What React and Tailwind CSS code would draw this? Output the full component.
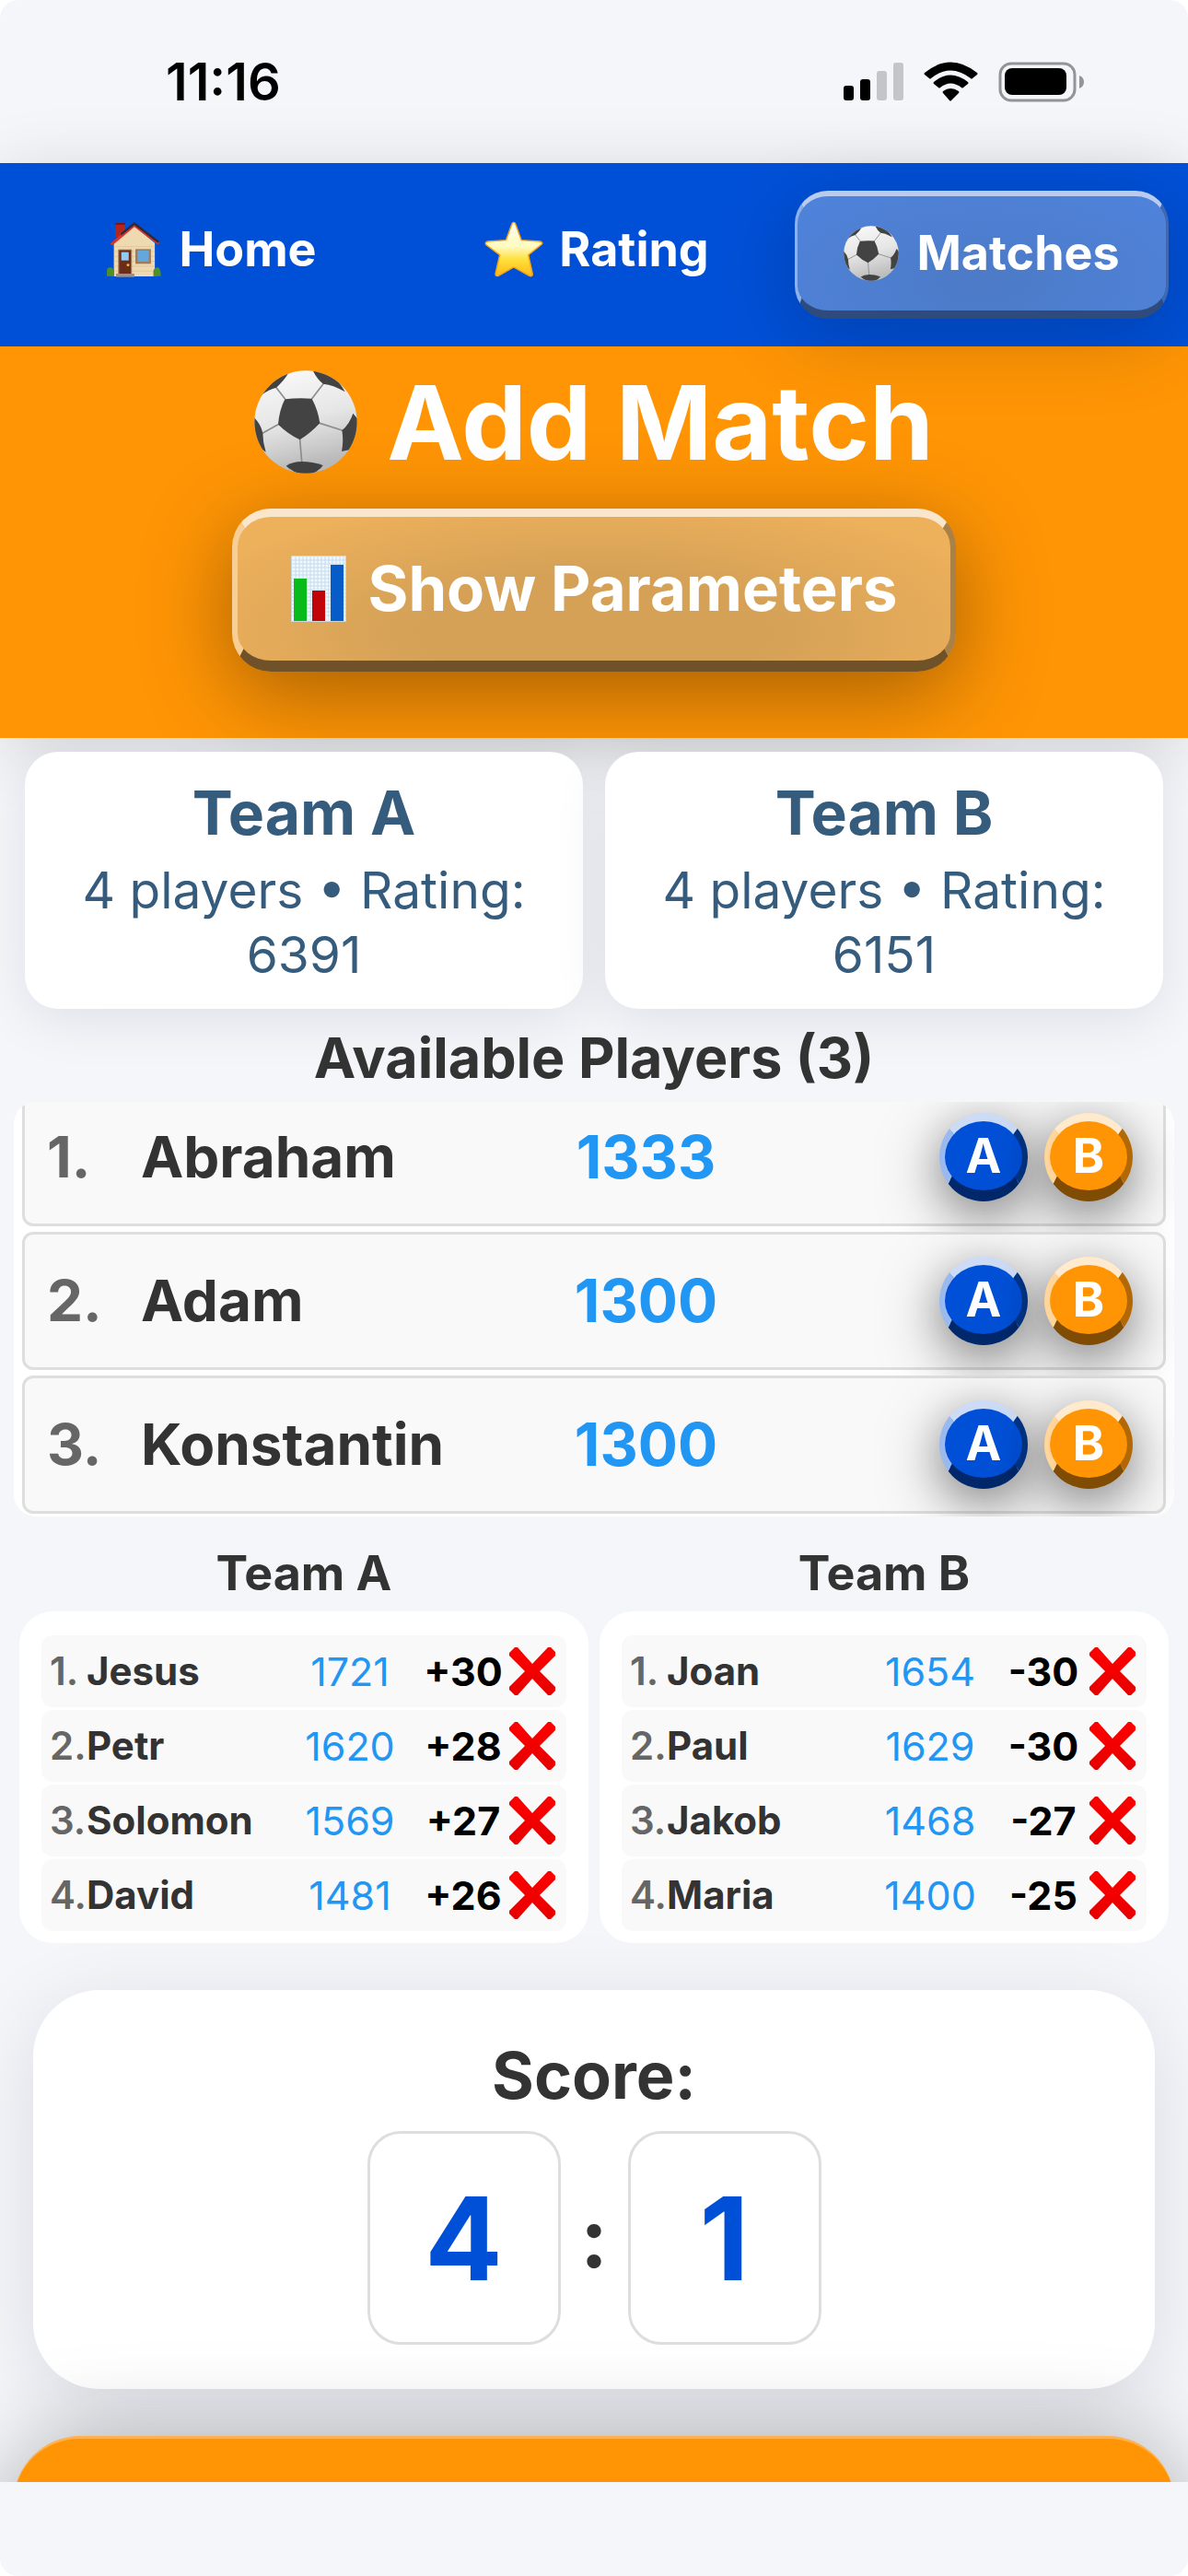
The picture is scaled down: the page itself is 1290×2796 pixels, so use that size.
import React from "react";

const availablePlayers = [
  { name: "Abraham", rating: 1333 },
  { name: "Adam", rating: 1300 },
  { name: "Konstantin", rating: 1300 },
];

const teams = [
  {
    name: "Team A",
    total: 6391,
    players: [
      { name: "Jesus", rating: 1721, change: "+30" },
      { name: "Petr", rating: 1620, change: "+28" },
      { name: "Solomon", rating: 1569, change: "+27" },
      { name: "David", rating: 1481, change: "+26" },
    ],
  },
  {
    name: "Team B",
    total: 6151,
    players: [
      { name: "Joan", rating: 1654, change: "-30" },
      { name: "Paul", rating: 1629, change: "-30" },
      { name: "Jakob", rating: 1468, change: "-27" },
      { name: "Maria", rating: 1400, change: "-25" },
    ],
  },
];

function SoccerBall({ className, id }) {
  return (
    <svg className={className} viewBox="30 36 336 336" aria-hidden="true">
      <defs>
        <linearGradient id={id} x1="0" y1="0" x2="0.25" y2="1">
          <stop offset="0" stopColor="#fbfbfb" />
          <stop offset="0.55" stopColor="#e6e6e6" />
          <stop offset="1" stopColor="#bdbdbd" />
        </linearGradient>
        <clipPath id={id + "-clip"}>
          <circle cx="198" cy="204" r="167" />
        </clipPath>
      </defs>
      <circle cx="198" cy="204" r="167" fill={"url(#" + id + ")"} />
      <g clipPath={"url(#" + id + "-clip)"}>
        <g fill="none" stroke="#8d8d8d" strokeWidth="5" strokeLinecap="round">
          <path d="M130 128L102 92M218 128L255 80M244 208L316 231M179 262L185 333M108 212L58 240" />
        </g>
        <g fill="#434343">
          <path d="M130 130Q174 124 218 128Q238 165 244 208Q214 240 179 262Q140 243 108 212Q112 165 130 130Z" />
          <path d="M54 116Q66 70 142 44Q128 68 102 92Q78 98 54 116Z" />
          <path d="M222 38Q290 36 326 106Q290 84 255 80Q236 66 222 38Z" />
          <path d="M352 176L372 200L360 290L315 300Q322 266 316 231Q340 212 352 176Z" />
          <path d="M134 347Q155 333 185 333Q220 333 254 345Q236 372 198 376Q160 372 134 347Z" />
          <path d="M30 190Q52 212 58 240Q58 270 68 302Q40 290 26 225Z" />
        </g>
      </g>
    </svg>
  );
}

function House({ className }) {
  return (
    <svg className={className} viewBox="64 60 154 180" preserveAspectRatio="none" aria-hidden="true">
      <rect x="88" y="63" width="28" height="45" fill="#b3261e" />
      <rect x="88" y="63" width="28" height="6" fill="#7a1712" />
      <path d="M84 128L142 74L200 128V237H84Z" fill="#efd9b0" />
      <path d="M84 140H200M84 156H200M84 172H200M84 188H200M84 204H200M84 220H200" stroke="#dcc295" strokeWidth="2" />
      <path d="M142 61L212 124V131H206L142 76L80 136L73 131Z" fill="#d9342b" />
      <path d="M142 60L213 123L209 128L142 70L104 104V96Z" fill="#2b2b31" />
      <rect x="96" y="149" width="39" height="80" fill="#a07a5c" />
      <rect x="99" y="152" width="33" height="77" fill="#6d2b1a" />
      <rect x="105" y="158" width="21" height="27" fill="#8fcdf3" />
      <circle cx="124" cy="200" r="4" fill="#f2c230" />
      <rect x="145" y="148" width="44" height="48" fill="#a07a5c" />
      <rect x="151" y="153" width="32" height="36" fill="#64a7dc" />
      <rect x="90" y="228" width="52" height="11" fill="#9c9188" />
      <path d="M64 236V220Q64 208 74 208Q84 210 84 222V237Z" fill="#4f8f2a" />
      <path d="M196 237V220Q198 208 208 207Q218 212 217 236Z" fill="#4f8f2a" />
    </svg>
  );
}

function Star({ className }) {
  return (
    <svg className={className} viewBox="1137 56 169 183" preserveAspectRatio="none" aria-hidden="true">
      <defs>
        <linearGradient id="star-fill" x1="0" y1="0" x2="0" y2="1">
          <stop offset="0" stopColor="#fffdf0" />
          <stop offset="0.45" stopColor="#fffbc0" />
          <stop offset="0.7" stopColor="#ffdf3a" />
          <stop offset="1" stopColor="#fcb818" />
        </linearGradient>
      </defs>
      <path
        d="M1221 60Q1225 60 1227 68L1243 118L1296 122Q1306 125 1301 132L1263 166L1275 228Q1275 238 1266 234L1221 206L1177 234Q1168 237 1169 227L1181 166L1142 133Q1137 125 1147 122L1199 118L1215 68Q1217 60 1221 60Z"
        fill="url(#star-fill)"
        stroke="#f2a21c"
        strokeWidth="4"
        strokeLinejoin="round"
      />
    </svg>
  );
}

function BarChart({ className }) {
  return (
    <svg className={className} viewBox="0 0 60 72" aria-hidden="true">
      <rect width="60" height="72" fill="#c9d6dc" />
      <rect x="1" y="1" width="58" height="70" fill="#f1f7fb" />
      <path
        d="M5 1V71M9 1V71M13 1V71M17 1V71M21 1V71M25 1V71M29 1V71M33 1V71M37 1V71M41 1V71M45 1V71M49 1V71M53 1V71M57 1V71M1 5H59M1 9H59M1 13H59M1 17H59M1 21H59M1 25H59M1 29H59M1 33H59M1 37H59M1 41H59M1 45H59M1 49H59M1 53H59M1 57H59M1 61H59M1 65H59"
        stroke="#c3ddf0"
        strokeWidth="1"
      />
      <rect x="3" y="25" width="14" height="46" fill="#08bb1b" />
      <rect x="23" y="38" width="14" height="33" fill="#c00409" />
      <rect x="43" y="10" width="14" height="61" fill="#075cc8" />
    </svg>
  );
}

function StatusIcons() {
  return (
    <svg className="h-[44px] w-[262px]" viewBox="0 0 262 44" aria-hidden="true">
      <rect x="0" y="26" width="11" height="16" rx="3" fill="#000" />
      <rect x="18" y="19" width="11" height="23" rx="3" fill="#000" />
      <rect x="36" y="10" width="11" height="32" rx="3" fill="#c4c4c9" />
      <rect x="54" y="1" width="11" height="41" rx="3" fill="#c4c4c9" />
      <path d="M88 12Q116 -11 145 12Q146 13 145 14L140 18Q139 19 138 18Q116 1 95 18Q94 19 93 18L88 14Q87 13 88 12Z" fill="#000" />
      <path d="M98 22Q116 7 135 22Q136 23 135 24L130 28Q129 29 128 28Q116 19 105 28Q104 29 103 28L98 24Q97 23 98 22Z" fill="#000" />
      <path d="M108 32Q116 26 125 32Q126 33 125 34L117 42Q116 43 115 42L108 34Q107 33 108 32Z" fill="#000" />
      <rect x="170" y="2" width="81" height="40" rx="12" fill="none" stroke="#949496" strokeWidth="3" />
      <rect x="175" y="7" width="67" height="29" rx="8" fill="#000" />
      <path d="M256 15Q261 17 261 22Q261 27 256 29Z" fill="#949496" />
    </svg>
  );
}

function Cross() {
  return (
    <svg className="h-[52px] w-[52px]" viewBox="0 0 52 52" aria-hidden="true">
      <defs>
        <linearGradient id="cross-fill" x1="0" y1="0" x2="0" y2="1">
          <stop offset="0" stopColor="#ff0000" />
          <stop offset="1" stopColor="#e60000" />
        </linearGradient>
      </defs>
      <path
        d="M7 0H10L26 18L43 0H46L51 5V9L34 26L51 43V47L46 52H43L26 34L10 52H7L1 46V43L18 26L1 9V6Z"
        fill="url(#cross-fill)"
      />
    </svg>
  );
}

function PlayerRow({ player, index }) {
  return (
    <li className="grid h-[150px] grid-cols-[102px_44fr_22fr_42fr] items-center rounded-[12px] border-[3px] border-[#dedede] bg-[#f9f9f9] pr-[33px] pl-[24px] text-[62px] leading-[90px] font-bold">
      <span className="text-[#666]">{index + 1}.</span>
      <span className="text-[#333]">{player.name}</span>
      <span className="text-center text-[64px] text-[#2196f3]">{player.rating}</span>
      <span className="flex justify-end gap-[18px]">
        <button
          aria-label={"Add " + player.name + " to Team A"}
          className="flex size-24 items-center justify-center rounded-full border-x-[6px] border-t-[9px] border-b-[12px] border-t-[#ccdcf7] border-r-[#003587] border-b-[#00286b] border-l-[#99b9ef] bg-[#0050d7] text-[52px] leading-none text-white shadow-[0_18px_72px_rgba(0,0,0,0.36),0_12px_40px_rgba(0,0,0,0.22)]"
        >
          A
        </button>
        <button
          aria-label={"Add " + player.name + " to Team B"}
          className="flex size-24 items-center justify-center rounded-full border-x-[6px] border-t-[9px] border-b-[12px] border-t-[#ffeacd] border-r-[#b26804] border-b-[#804b03] border-l-[#ffd59b] bg-[#ff9505] text-[52px] leading-none text-white shadow-[0_18px_72px_rgba(0,0,0,0.36),0_12px_40px_rgba(0,0,0,0.22)]"
        >
          B
        </button>
      </span>
    </li>
  );
}

function TeamList({ team }) {
  return (
    <section>
      <h3 className="text-center text-[52px] leading-[82px] font-bold text-[#333]">{team.name}</h3>
      <ol className="flex flex-col gap-[3px] rounded-[36px] bg-white px-6 pt-[26px] pb-[13px]">
        {team.players.map((p, i) => (
          <li
            key={p.name}
            className="grid h-[78px] grid-cols-[40px_1fr_148px_98px_52px] items-center rounded-[12px] bg-[#f9f9f9] pr-[11px] pl-[9px] text-[42px] leading-[60px]"
          >
            <span className="font-semibold text-[#666]">{i + 1}.</span>
            <span className="font-bold text-[#333]">{p.name}</span>
            <span className="text-center text-[43px] text-[#2196f3]">{p.rating}</span>
            <span className="text-center text-[43px] font-bold text-black">{p.change}</span>
            <button aria-label={"Remove " + p.name}>
              <Cross />
            </button>
          </li>
        ))}
      </ol>
    </section>
  );
}

export default function App() {
  return (
    <div className="h-screen bg-white">
      <div className="flex h-full flex-col overflow-hidden rounded-[20px] bg-[#f5f6fa] font-['Inter',sans-serif]">
        <div className="flex h-[177px] shrink-0 items-center justify-between pr-[112px] pl-[180px]">
          <span className="text-[56px] leading-[60px] font-semibold text-black">11:16</span>
          <StatusIcons />
        </div>

        <div className="shrink-0 shadow-[0_12px_72px_rgba(0,0,0,0.14)]">
          <nav className="grid grid-cols-3 items-start gap-3 bg-[#0050d7] pt-[30px] pr-[21px] pb-[30px] pl-[27px] text-[52px] leading-[60px] font-bold text-white">
            <a href="#home" className="flex h-[127px] items-center justify-center gap-[19px]">
              <House className="h-[60px] w-[59px]" />
              Home
            </a>
            <a href="#rating" className="flex h-[127px] items-center justify-center gap-[17px]">
              <Star className="h-[61px] w-[64px]" />
              Rating
            </a>
            <a
              href="#matches"
              aria-current="page"
              className="flex h-[139px] items-center justify-center gap-[19px] rounded-[36px] border-x-[3px] border-t-[6px] border-b-[9px] border-t-[#b9ccf0] border-r-[#3f68b0] border-b-[#2f4b7c] border-l-[#8fb1ea] bg-[radial-gradient(ellipse_at_50%_75%,#4c7ac6,#4f83dc)] shadow-[0_18px_90px_rgba(0,0,0,0.2)]"
            >
              <SoccerBall className="size-[60px]" id="ball-nav" />
              Matches
            </a>
          </nav>

          <header className="flex flex-col items-center bg-[#ff9505] pt-3 pb-[72px] text-white">
            <h1 className="flex items-center gap-8 text-[112px] leading-[140px] font-bold">
              <SoccerBall className="size-[112px]" id="ball-title" />
              Add Match
            </h1>
            <button className="mt-6 flex h-[177px] items-center gap-6 rounded-[42px] border-x-[6px] border-t-[9px] border-b-[12px] border-t-[#fae6cc] border-r-[#a98045] border-b-[#6f512a] border-l-[#f7cf96] bg-[radial-gradient(ellipse_at_50%_80%,#d4a157_35%,#edb05b_85%)] px-[58px] text-[67px] leading-[88px] font-bold shadow-[0_24px_96px_rgba(0,0,0,0.36)]">
              <BarChart className="h-[72px] w-[60px]" />
              Show Parameters
            </button>
          </header>
        </div>

        <main className="min-h-0 flex-1 overflow-y-auto [scrollbar-width:none]">
          <div className="grid grid-cols-2 gap-6 px-[27px] pt-[15px]">
            {teams.map((t) => (
              <section
                key={t.name}
                className="rounded-[36px] bg-white px-6 py-6 text-center text-[#355c7d] shadow-[0_12px_60px_rgba(0,0,40,0.09)]"
              >
                <h2 className="mb-[7px] text-[66px] leading-[84px] font-bold">{t.name}</h2>
                <p className="text-[55px] leading-[70px]">4 players • Rating: {t.total}</p>
              </section>
            ))}
          </div>

          <h2 className="mt-[5px] text-center text-[61px] leading-[96px] font-bold text-[#333]">
            Available Players ({availablePlayers.length})
          </h2>
          <div className="mx-[15px] overflow-hidden rounded-[24px] bg-white px-[9px] pb-[3px]">
            <ol className="-mt-[15px] flex flex-col gap-[6px]">
              {availablePlayers.map((p, i) => (
                <PlayerRow key={p.name} player={p} index={i} />
              ))}
            </ol>
          </div>

          <div className="mt-[21px] grid grid-cols-2 gap-3 px-[21px]">
            {teams.map((t) => (
              <TeamList key={t.name} team={t} />
            ))}
          </div>

          <section className="mx-9 mt-[51px] rounded-[72px] bg-white pt-[45px] pb-12 shadow-[0_18px_90px_rgba(0,0,40,0.11)]">
            <h2 className="text-center text-[70px] leading-[96px] font-bold text-[#333]">Score:</h2>
            <div className="mt-3 flex items-center justify-center">
              <input
                aria-label="Team A score"
                inputMode="numeric"
                defaultValue="4"
                className="h-[232px] w-[210px] rounded-[36px] border-[3px] border-[#dedede] text-center text-[125px] font-bold text-[#0050d7]"
              />
              <span className="w-[73px] text-center text-[90px] leading-[96px] font-bold text-[#333]">:</span>
              <input
                aria-label="Team B score"
                inputMode="numeric"
                defaultValue="1"
                className="h-[232px] w-[210px] rounded-[36px] border-[3px] border-[#dedede] text-center text-[125px] font-bold text-[#0050d7]"
              />
            </div>
          </section>

          <div className="mt-[51px] px-[15px]">
            <button
              aria-label="Save match"
              className="block h-[180px] w-full rounded-[72px] border-t-[3px] border-[#ffb04f] bg-[#ff9505] shadow-[0_18px_108px_rgba(0,0,0,0.4)]"
            />
          </div>
        </main>

        <div className="h-[102px] shrink-0 bg-[#f5f6fa]" />
      </div>
    </div>
  );
}
